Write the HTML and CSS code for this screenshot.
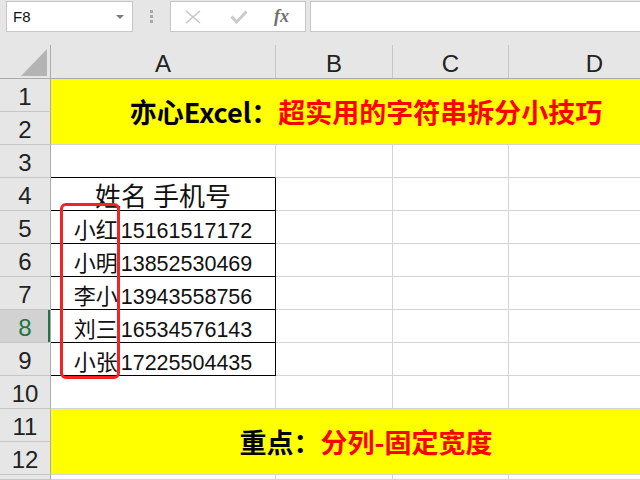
FILE: index.html
```html
<!DOCTYPE html>
<html lang="zh-CN">
<head>
    <meta charset="UTF-8">
    <title>字符串拆分</title>
    <link rel="stylesheet" href="styles.css">
</head>
<body>

    <div class="topbar">
        <div class="namebox">
            <span>F8</span>
            <svg class="caret" width="8" height="4" viewBox="0 0 8 4"><polygon points="0,0 8,0 4,4" fill="#7b7b7b"/></svg>
        </div>
        <div class="grip"><i></i><i></i><i></i></div>
        <div class="fxbox">
            <svg width="16" height="14" viewBox="0 0 16 14"><path d="M1 1L15 13M15 1L1 13" stroke="#c6c6c6" stroke-width="1.6" fill="none"/></svg>
            <svg width="18" height="14" viewBox="0 0 18 14"><path d="M1.5 6.5L6.5 12L16.5 1.5" stroke="#cacaca" stroke-width="3" fill="none"/></svg>
            <span class="fx">fx</span>
        </div>
        <div class="formula"></div>
    </div>

    <div class="viewport">
        <div class="sheet">
            <div class="corner">
                <svg width="26" height="27" viewBox="0 0 26 27"><polygon points="26,0 26,27 0,27" fill="#b4b4b4"/></svg>
            </div>
            <div class="ch">A</div>
            <div class="ch">B</div>
            <div class="ch">C</div>
            <div class="ch">D</div>

            <div class="rh">1</div>
            <div class="banner"><span>亦心Excel：</span><span class="red">超实用的字符串拆分小技巧</span></div>
            <div class="rh">2</div>

            <div class="rh">3</div>
            <div class="cell above-table"></div><div class="cell"></div><div class="cell"></div><div class="cell"></div>

            <div class="rh">4</div>
            <div class="cell boxed head">姓名 手机号</div><div class="cell"></div><div class="cell"></div><div class="cell"></div>

            <div class="rh">5</div>
            <div class="cell boxed"><span>小红<span class="num">15161517172</span></span></div><div class="cell"></div><div class="cell"></div><div class="cell"></div>

            <div class="rh">6</div>
            <div class="cell boxed"><span>小明<span class="num">13852530469</span></span></div><div class="cell"></div><div class="cell"></div><div class="cell"></div>

            <div class="rh">7</div>
            <div class="cell boxed"><span>李小<span class="num">13943558756</span></span></div><div class="cell"></div><div class="cell"></div><div class="cell"></div>

            <div class="rh active">8</div>
            <div class="cell boxed"><span>刘三<span class="num">16534576143</span></span></div><div class="cell"></div><div class="cell"></div><div class="cell"></div>

            <div class="rh">9</div>
            <div class="cell boxed"><span>小张<span class="num">17225504435</span></span></div><div class="cell"></div><div class="cell"></div><div class="cell"></div>

            <div class="rh">10</div>
            <div class="cell"></div><div class="cell"></div><div class="cell"></div><div class="cell"></div>

            <div class="rh">11</div>
            <div class="banner"><span>重点：</span><span class="red">分列-固定宽度</span></div>
            <div class="rh">12</div>

            <!-- row 13, only its top edge is on screen -->
            <div class="rh"></div>
            <div class="cell"></div><div class="cell"></div><div class="cell"></div><div class="cell"></div>

            <!-- red frame drawn over the name column -->
            <div class="mark"></div>
        </div>
    </div>

</body>
</html>
```

FILE: styles.css
```css
* {
    box-sizing: border-box;
}

body {
    margin: 0;
    width: 640px;
    height: 480px;
    overflow: hidden;
    background-color: #e6e6e6;
    font-family: "Liberation Sans", "Noto Sans CJK SC", sans-serif;
}

/* Formula bar */
.topbar {
    height: 45px;
    display: flex;
    align-items: flex-start;
    padding: 1px 0 0 6px;
}

.namebox {
    width: 127px;
    height: 31px;
    background-color: #fff;
    border: 1px solid #c6c6c6;
    display: flex;
    align-items: center;
    padding: 0 8px 0 6px;
    font-size: 15px;
    color: #111;
}

.namebox .caret {
    margin-left: auto;
}

.grip {
    width: 37px;
    height: 31px;
    display: flex;
    flex-direction: column;
    align-items: center;
    justify-content: center;
    gap: 2px;
}

.grip i {
    width: 3px;
    height: 3px;
    background-color: #a8a8a8;
}

.fxbox {
    width: 136px;
    height: 31px;
    background-color: #fff;
    border: 1px solid #c6c6c6;
    display: flex;
    align-items: center;
    padding-left: 14px;
    gap: 29px;
}

.fx {
    margin-left: -3px;
    font-family: "Liberation Serif", serif;
    font-style: italic;
    font-weight: bold;
    font-size: 18px;
    color: #6f6f6f;
}

.formula {
    flex: 1;
    height: 31px;
    margin-left: 4px;
    background-color: #fff;
    border: 1px solid #c6c6c6;
    border-right: none;
}

/* Sheet grid, column D runs past the window edge */
.viewport {
    width: 640px;
    height: 435px;
    overflow: hidden;
}

.sheet {
    position: relative;
    width: 681px;
    height: 435px;
    display: grid;
    grid-template-columns: 51px 225px 117px 116px 172px;
    grid-template-rows: 34px repeat(12, 33px) 1fr;
    background-color: #fff;
}

.corner,
.ch {
    background-color: #e6e6e6;
    border-bottom: 1px solid #ababab;
}

.corner {
    border-right: 1px solid #ababab;
    display: flex;
    align-items: flex-end;
    justify-content: flex-end;
    padding: 0 3px 2px 0;
}

.ch {
    border-right: 1px solid #c6c6c6;
    display: flex;
    align-items: center;
    justify-content: center;
    padding-top: 4px;
    font-size: 24px;
    color: #222;
}

.rh {
    grid-column: 1;
    background-color: #e6e6e6;
    border-right: 1px solid #ababab;
    border-bottom: 1px solid #c6c6c6;
    display: flex;
    align-items: center;
    justify-content: center;
    padding-top: 3px;
    font-size: 24px;
    color: #222;
}

.rh.active {
    background-color: #d2d2d2;
    color: #217346;
    box-shadow: inset -2px 0 0 #217346;
}

.cell {
    border-right: 1px solid #d4d4d4;
    border-bottom: 1px solid #d4d4d4;
    display: flex;
    align-items: center;
    justify-content: center;
    font-size: 22px;
    color: #111;
}

.cell .num {
    margin-left: 3px;
    font-size: 21.5px;
}

.cell.above-table {
    border-bottom-color: #000;
}

.cell.boxed {
    border-right-color: #000;
    border-bottom-color: #000;
    padding-top: 1px;
}

.cell.head {
    font-size: 26px;
    font-family: "Noto Sans CJK SC", sans-serif;
    padding-top: 0;
}

.banner {
    grid-column: 2 / -1;
    grid-row: span 2;
    background-color: #ffff00;
    border-bottom: 1px solid #d4d4d4;
    display: flex;
    align-items: center;
    justify-content: center;
    font-family: "Noto Sans CJK SC", sans-serif;
    font-weight: bold;
    font-size: 27px;
    color: #000;
}

.red {
    color: #ff0000;
}

.mark {
    position: absolute;
    left: 60px;
    top: 158px;
    width: 60px;
    height: 176px;
    border: 3px solid #f42222;
    border-radius: 6px;
}
```
